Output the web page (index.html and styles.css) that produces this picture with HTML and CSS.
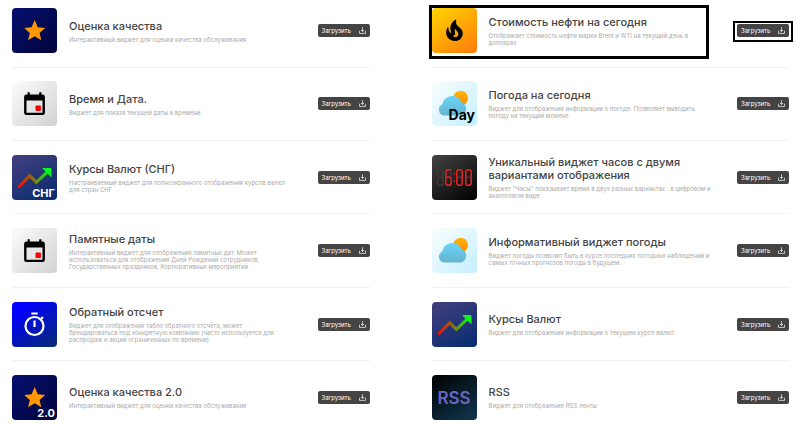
FILE: styles.css
```css
* { box-sizing: border-box; }

body {
  margin: 0;
  background: #fff;
  color: #444;
  font-family: Inter, "Open Sans", sans-serif;
}

.defs { position: absolute; width: 0; height: 0; }

.catalog {
  display: grid;
  grid-template-columns: repeat(2, minmax(0, 1fr));
  column-gap: 62px;
  min-height: 100vh;
  padding: 8px 11px 4px 12px;
}

.column {
  display: flex;
  flex-direction: column;
  justify-content: space-between;
}

hr { width: 100%; height: 1px; margin: 0; border: 0; background: #f1f1f1; }

.widget {
  position: relative;
  display: flex;
  align-items: center;
  gap: 12px;
}

.tile { flex: none; width: 45px; height: 45px; border-radius: 4px; }
.navy { background: linear-gradient(135deg, #041070, #02043a); }
.silver { background: linear-gradient(135deg, #fcfcfc, #d2d2d2); }
.indigo { background: linear-gradient(150deg, #443f7e, #062c70); }
.blue { background: linear-gradient(145deg, #0000ff 15%, #062c70); }
.amber { background: linear-gradient(145deg, #ffd500, #ff7a0c); }
.ice { background: linear-gradient(135deg, #fbfeff, #c4effe); }
.black { background: linear-gradient(145deg, #444, #000); }
.teal { background: linear-gradient(145deg, #000, #10384f); }

.mark { font-size: 11px; font-weight: 700; text-anchor: end; }
.day { font-size: 14px; }
.rss { font-size: 17px; font-weight: 600; text-anchor: middle; fill: #6a66c0; }

.info { flex: 1; min-width: 0; padding-top: 1px; white-space: nowrap; }

h2 { margin: 0 0 3px; font-size: 11px; font-weight: 500; line-height: 13px; }
p { margin: 0; color: #aaa; font-size: 6px; line-height: 7px; }

.load {
  position: relative;
  display: flex;
  flex: none;
  align-items: center;
  justify-content: space-between;
  width: 52px;
  height: 13px;
  padding: 0 4px;
  border: 0;
  border-radius: 2px;
  background: #444;
  color: #fff;
  font-family: inherit;
  font-size: 6px;
  line-height: 13px;
}

.arrow { width: 7px; height: 7px; }

.featured::before,
.featured .load::before {
  content: "";
  position: absolute;
  border: 3px solid #000;
}

.featured::before { inset: -3px 80px -6px -3px; }
.featured .load::before { inset: -3px -4px -5px; border-width: 2px; }
```
FILE: index.html
```html
<!DOCTYPE html>
<html lang="ru">
<head>
<meta charset="utf-8">
<meta name="viewport" content="width=device-width, initial-scale=1">
<title>Виджеты</title>
<link rel="stylesheet" href="styles.css">
</head>
<body>
<svg class="defs" aria-hidden="true">
  <defs>
    <linearGradient id="rise" x1="0" y1="0" x2="1" y2="0"><stop offset="0" stop-color="#f80c00"/><stop offset=".5" stop-color="#84790c"/><stop offset="1" stop-color="#00ff18"/></linearGradient>
    <linearGradient id="sun" x1="0" y1="0" x2="0" y2="1"><stop offset="0" stop-color="#ffb400"/><stop offset="1" stop-color="#ff8c00"/></linearGradient>
    <linearGradient id="sky" x1="0" y1="0" x2="0" y2="1"><stop offset="0" stop-color="#68d6fb"/><stop offset="1" stop-color="#65b3ce"/></linearGradient>
    <symbol id="star" viewBox="0 0 45 45"><path fill="#ff9800" d="M22.7 12l3.1 7.2 7.4.7-5.6 5 1.7 7.4-6.6-4-6.6 4 1.7-7.4-5.6-5 7.4-.7z"/></symbol>
    <symbol id="calendar" viewBox="0 0 45 45"><path fill="#000" fill-rule="evenodd" d="M15.6 11.3h2.2v2.2h9.4v-2.2h2.2v2.2h1.1a2.4 2.4 0 0 1 2.4 2.4v15.8a2.4 2.4 0 0 1-2.4 2.4h-16a2.4 2.4 0 0 1-2.4-2.4V15.9a2.4 2.4 0 0 1 2.4-2.4h1.1zM14.5 19.4v12.3h16V19.4z"/><rect x="23.5" y="24.5" width="5.4" height="5.4" rx="1" fill="red"/></symbol>
    <symbol id="chart" viewBox="0 0 45 45"><path fill="none" stroke="url(#rise)" stroke-width="3" stroke-linecap="round" d="M7 31.5l10.7-10.9 6.6 6.8L37 15.3"/><path fill="#0cf51c" stroke="#0cf51c" stroke-width="1" stroke-linejoin="round" d="M31 13.5h8v8z"/></symbol>
    <symbol id="cloud" viewBox="0 0 45 45"><circle cx="28.7" cy="17" r="7.3" fill="url(#sun)"/><path fill="url(#sky)" d="M12.5 34.5a5.8 5.8 0 0 1-2.3-11 10.2 10.2 0 0 1 19.5-2.3 7 7 0 0 1-.7 13.3z"/></symbol>
    <symbol id="fire" viewBox="0 0 24 24"><path fill="#000" d="M19.48 12.35c-1.57-4.08-7.16-4.3-5.81-10.23.1-.44-.37-.78-.75-.55C9.29 3.71 6.68 8 8.87 13.62c.18.46-.36.89-.75.59-1.81-1.37-2-3.34-1.84-4.75.06-.52-.62-.77-.91-.34C4.69 10.16 4 11.84 4 14.37c.38 5.6 5.11 7.32 6.81 7.54 2.43.31 5.06-.14 6.95-1.87 2.08-1.93 2.84-5.01 1.72-7.69zm-9.28 5.03c1.44-.35 2.18-1.39 2.38-2.31.33-1.43-.96-2.83-.09-5.09.33 1.87 3.27 3.04 3.27 5.08.08 2.53-2.66 4.7-5.56 2.32z"/></symbol>
    <symbol id="timer" viewBox="0 0 45 45"><g fill="none" stroke="#fff" stroke-width="2.2"><circle cx="22.5" cy="24" r="9"/><path d="M19.3 11.5h6.4M22.5 18.5v6.6M29 17l2-2"/></g></symbol>
    <symbol id="download" viewBox="0 0 7 7"><path fill="none" stroke="#fff" stroke-width=".7" d="M3.5.3v4M2 3l1.5 1.5L5 3M.5 3.7v2.7h6V3.7"/></symbol>
    <symbol id="eight" viewBox="0 0 7 17"><path fill="none" stroke="currentColor" stroke-width="1.2" d="M2 .8h3L6.2 2v5L5 8.3H2L.8 7V2zM2 8.3h3l1.2 1.4v5L5 16.2H2L.8 14.7v-5z"/></symbol>
    <symbol id="zero" viewBox="0 0 7 17"><path fill="none" stroke="currentColor" stroke-width="1.4" d="M2 .8h3L6.2 2v12.7L5 16.2H2L.8 14.7V2z"/></symbol>
    <symbol id="six" viewBox="0 0 7 17"><path fill="none" stroke="currentColor" stroke-width="1.4" d="M5.8.8H2L.8 2v12.7L2 16.2h3l1.2-1.5v-5L5 8.3H1"/></symbol>
  </defs>
</svg>
<main class="catalog">
  <section class="column">
    <article class="widget">
      <svg class="tile navy" viewBox="0 0 45 45"><use href="#star"/></svg>
      <div class="info"><h2>Оценка качества</h2><p>Интерактивный виджет для оценки качества обслуживания</p></div>
      <button class="load" type="button">Загрузить<svg class="arrow"><use href="#download"/></svg></button>
    </article>
    <hr>
    <article class="widget">
      <svg class="tile silver" viewBox="0 0 45 45"><use href="#calendar"/></svg>
      <div class="info"><h2>Время и Дата.</h2><p>Виджет для показа текущей даты и времени</p></div>
      <button class="load" type="button">Загрузить<svg class="arrow"><use href="#download"/></svg></button>
    </article>
    <hr>
    <article class="widget">
      <svg class="tile indigo" viewBox="0 0 45 45"><use href="#chart"/><text class="mark" x="43" y="42" fill="#fff">СНГ</text></svg>
      <div class="info"><h2>Курсы Валют (СНГ)</h2><p>Настраиваемый виджет для полноэкранного отображения курсов валют<br>для стран СНГ</p></div>
      <button class="load" type="button">Загрузить<svg class="arrow"><use href="#download"/></svg></button>
    </article>
    <hr>
    <article class="widget">
      <svg class="tile silver" viewBox="0 0 45 45"><use href="#calendar"/></svg>
      <div class="info"><h2>Памятные даты</h2><p>Интерактивный виджет для отображения памятных дат. Может<br>использоваться для отображения Дней Рождений сотрудников,<br>Государственных праздников, Корпоративных мероприятий</p></div>
      <button class="load" type="button">Загрузить<svg class="arrow"><use href="#download"/></svg></button>
    </article>
    <hr>
    <article class="widget">
      <svg class="tile blue" viewBox="0 0 45 45"><use href="#timer"/></svg>
      <div class="info"><h2>Обратный отсчет</h2><p>Виджет для отображения табло обратного отсчёта, может<br>брендироваться под конкретную компанию (часто используется для<br>распродаж и акций ограниченных по времени)</p></div>
      <button class="load" type="button">Загрузить<svg class="arrow"><use href="#download"/></svg></button>
    </article>
    <hr>
    <article class="widget">
      <svg class="tile navy" viewBox="0 0 45 45"><use href="#star"/><text class="mark" x="43" y="42" fill="#fff">2.0</text></svg>
      <div class="info"><h2>Оценка качества 2.0</h2><p>Интерактивный виджет для оценки качества обслуживания</p></div>
      <button class="load" type="button">Загрузить<svg class="arrow"><use href="#download"/></svg></button>
    </article>
  </section>
  <section class="column">
    <article class="widget featured">
      <svg class="tile amber" viewBox="0 0 45 45"><use href="#fire" x="10" y="10" width="25" height="25"/></svg>
      <div class="info"><h2>Стоимость нефти на сегодня</h2><p>Отображает стоимость нефти марки Brent и WTI на текущий день в<br>долларах</p></div>
      <button class="load" type="button">Загрузить<svg class="arrow"><use href="#download"/></svg></button>
    </article>
    <hr>
    <article class="widget">
      <svg class="tile ice" viewBox="0 0 45 45"><use href="#cloud"/><text class="mark day" x="43" y="39">Day</text></svg>
      <div class="info"><h2>Погода на сегодня</h2><p>Виджет для отображения информации о погоде. Позволяет выводить<br>погоду на текущий момент.</p></div>
      <button class="load" type="button">Загрузить<svg class="arrow"><use href="#download"/></svg></button>
    </article>
    <hr>
    <article class="widget">
      <svg class="tile black" viewBox="0 0 45 45"><g color="#443b3b"><use href="#eight" x="5" y="14" width="7" height="17"/><use href="#eight" x="13" y="14" width="7" height="17"/><use href="#eight" x="24" y="14" width="7" height="17"/><use href="#eight" x="33" y="14" width="7" height="17"/></g><g color="#f01c1c"><use href="#six" x="13" y="14" width="7" height="17"/><use href="#zero" x="24" y="14" width="7" height="17"/><use href="#zero" x="33" y="14" width="7" height="17"/></g><path fill="#f01c1c" d="M21.5 18H23v1.5h-1.5zM21.5 25.5H23V27h-1.5z"/></svg>
      <div class="info"><h2>Уникальный виджет часов с двумя<br>вариантами отображения</h2><p>Виджет "Часы" показывает время в двух разных вариантах : в цифровом и<br>аналоговом виде.</p></div>
      <button class="load" type="button">Загрузить<svg class="arrow"><use href="#download"/></svg></button>
    </article>
    <hr>
    <article class="widget">
      <svg class="tile ice" viewBox="0 0 45 45"><use href="#cloud"/></svg>
      <div class="info"><h2>Информативный виджет погоды</h2><p>Виджет погоды позволит быть в курсе последних погодных наблюдений и<br>самых точных прогнозов погоды в будущем.</p></div>
      <button class="load" type="button">Загрузить<svg class="arrow"><use href="#download"/></svg></button>
    </article>
    <hr>
    <article class="widget">
      <svg class="tile indigo" viewBox="0 0 45 45"><use href="#chart"/></svg>
      <div class="info"><h2>Курсы Валют</h2><p>Виджет для отображения информации о текущем курсе валют.</p></div>
      <button class="load" type="button">Загрузить<svg class="arrow"><use href="#download"/></svg></button>
    </article>
    <hr>
    <article class="widget">
      <svg class="tile teal" viewBox="0 0 45 45"><text class="mark rss" x="22" y="29">RSS</text></svg>
      <div class="info"><h2>RSS</h2><p>Виджет для отображение RSS ленты</p></div>
      <button class="load" type="button">Загрузить<svg class="arrow"><use href="#download"/></svg></button>
    </article>
  </section>
</main>
</body>
</html>
```
